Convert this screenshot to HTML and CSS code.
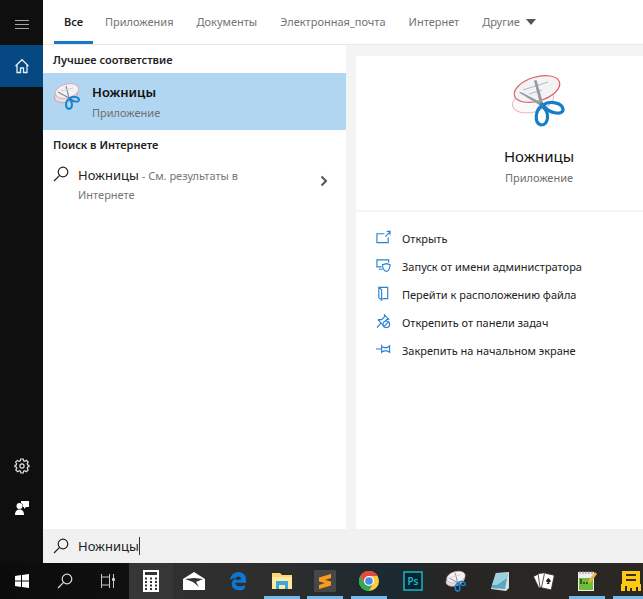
FILE: index.html
```html
<!DOCTYPE html>
<html lang="ru">
<head>
<meta charset="utf-8">
<meta name="viewport" content="width=device-width, initial-scale=1">
<title>Ножницы</title>
<link rel="stylesheet" href="styles.css">
</head>
<body>
<svg class="defs" aria-hidden="true">
  <symbol id="search" viewBox="0 0 16 16"><g fill="none" stroke="currentColor" stroke-width="1.2"><circle cx="10" cy="6" r="4.8"/><path d="M6.6 9.4 1 15"/></g></symbol>
  <symbol id="snip" viewBox="0 0 56 56">
    <ellipse cx="22" cy="27" rx="21" ry="11" transform="rotate(-14 22 27)" fill="#f8f8fa" fill-opacity=".7" stroke="#efb4b8"/>
    <ellipse cx="26" cy="15" rx="23.500" ry="12" transform="rotate(-17 26 15)" fill="#f2f3f5" stroke="#df6168" stroke-width="1.2"/>
    <path d="m12 16 25-8M18 20l13-4" stroke="#b8bdc4" stroke-width="1.2"/>
    <path d="M8 18.500 10 18l21 11-1 3zM23 6.500l2.500-.5 6.500 23-3 1z" fill="#929ba4"/>
    <g fill="none" stroke="#137ec9" stroke-width="3.2"><path d="M32 31c7-5 19-2 20 4s-13 6-20-4ZM31 32c-7 4-8 17-1 19 8 0 9-13 1-19Z"/></g>
    <circle cx="31" cy="31" r="2.500" fill="#2683bd"/>
  </symbol>
  <symbol id="snip-small" viewBox="0 0 28 28">
    <ellipse cx="13" cy="13" rx="12" ry="7" transform="rotate(-18 13 13)" fill="#dfe0e6" stroke="#d9a0ad"/>
    <ellipse cx="14" cy="9" rx="12" ry="7" transform="rotate(-15 14 9)" fill="#f3f1f3" stroke="#d9a0ad" stroke-width=".8"/>
    <path d="m5 10 11 6M13 4l3 12" stroke="#7f8790" stroke-width="1.1"/><path d="M8 9l12-3" stroke="#cdd0d4"/>
    <g fill="none" stroke="#1683cc" stroke-width="1.9"><path d="M17 16c5-3 9 0 9 2s-6 3-9-2ZM16 17c-4 2-4 9 0 10 4-1 4-7 0-10Z"/></g>
  </symbol>
</svg>
<div class="desktop">
  <div class="panel">
    <nav class="rail" aria-label="Меню">
      <button class="rail-button" aria-label="Развернуть"><svg width="16" height="16" viewBox="0 0 16 16"><path d="M1 4.5h14M1 8.500h14M1 12.500h14" stroke="#a5a5a5"/></svg></button>
      <button class="rail-button home" aria-label="Главная"><svg width="16" height="16" viewBox="0 0 16 16" fill="none" stroke="#e4eef7" stroke-width="1.3"><path d="m1.500 8 6.500-6.300L14.500 8M3 7v7.500h3.500V10h3v4.500H13V7"/></svg></button>
      <span class="rail-space"></span>
      <button class="rail-button" aria-label="Параметры"><svg width="16" height="16" viewBox="0 0 16 16" fill="none" stroke="#e4e4e4" stroke-width="1.200"><path d="m6.700 1-.4 1.900-1.300.5-1.600-1-1.800 1.800 1 1.600-.5 1.300L1 7.300v1.400l1.300.3.5 1.300-1 1.600 1.800 1.800 1.600-1 1.300.5.3 1.800h2.400l.4-1.800 1.200-.5 1.600 1 1.800-1.800-1-1.600.5-1.300 1.300-.3V7.300l-1.300-.3-.5-1.300 1-1.600-1.800-1.800-1.600 1-1.200-.5L9.200 1z"/><circle cx="8" cy="8" r="2.100"/></svg></button>
      <button class="rail-button" aria-label="Отзыв"><svg width="16" height="16" viewBox="0 0 16 16" fill="#fff"><path d="M7 1h8v6h-3l-2 2V7H9C9 4 8 3 7 3z"/><circle cx="5.500" cy="6" r="3"/><path d="M1 15c0-4 2-5.500 4.500-5.500S10 11 10 15z"/></svg></button>
    </nav>
    <main class="content">
      <nav class="tabs" aria-label="Категории">
        <button class="tab current">Все</button>
        <button class="tab">Приложения</button>
        <button class="tab">Документы</button>
        <button class="tab">Электронная_почта</button>
        <button class="tab">Интернет</button>
        <button class="tab more">Другие <svg width="10" height="6" viewBox="0 0 10 6"><path d="M0 0h10L5 6z" fill="#555"/></svg></button>
      </nav>
      <div class="columns">
        <section class="results">
          <h2 class="heading">Лучшее соответствие</h2>
          <button class="match">
            <svg width="28" height="28"><use href="#snip-small"/></svg>
            <span class="match-text"><strong class="match-name">Ножницы</strong><span class="kind">Приложение</span></span>
          </button>
          <h2 class="heading">Поиск в Интернете</h2>
          <button class="web">
            <svg width="16" height="16"><use href="#search"/></svg>
            <span class="web-text"><span class="query">Ножницы</span><span> - См. результаты в Интернете</span></span>
            <svg class="chevron" width="8" height="12" viewBox="0 0 8 12"><path d="m1.500 1.500 4.500 4.500-4.500 4.500" fill="none" stroke="#555" stroke-width="2"/></svg>
          </button>
        </section>
        <section class="details">
          <header class="app">
            <svg width="56" height="56"><use href="#snip"/></svg>
            <h1 class="app-name">Ножницы</h1>
            <p class="kind">Приложение</p>
          </header>
          <div class="actions">
            <button class="action"><svg viewBox="0 0 16 16"><path d="M9 4H1v9.500h12V8M10 7l5-5M11.500 1.500h3.500V5"/></svg>Открыть</button>
            <button class="action"><svg viewBox="0 0 16 16"><path d="M13.500 5V2H1v7.500h5M3 12h4M11 6l4 1.200c0 4-1 6-4 7.300-3-1.300-4-3.300-4-7.300z"/></svg>Запуск от имени администратора</button>
            <button class="action"><svg viewBox="0 0 16 16"><path d="M3 1.500h9.500v12H7M3 1.500l3 2.500v11l-3-2.500z"/></svg>Перейти к расположению файла</button>
            <button class="action"><svg viewBox="0 0 16 16"><path d="M1 14.500 5 10M2 6l6 6.500M2 6h4l3-3V1l4.500 4.500-2 .5L10 7.500"/><circle cx="11" cy="11" r="3.500"/><path d="m8.500 13.500 5-5"/></svg>Открепить от панели задач</button>
            <button class="action"><svg viewBox="0 0 16 16"><path d="M0 7.500h6M6 3v9M6 5l3 1h3l2.500-2v7L12 9.500H9L6 10.500"/></svg>Закрепить на начальном экране</button>
          </div>
        </section>
      </div>
      <label class="searchbar">
        <svg width="16" height="16"><use href="#search"/></svg>
        <input class="field" type="text" aria-label="Поиск" value="Ножницы"><span class="caret"></span>
      </label>
    </main>
  </div>
  <nav class="taskbar" aria-label="Панель задач">
    <button class="task" aria-label="Пуск"><svg width="16" height="16" viewBox="0 0 16 16"><path d="m1 3 6-1v5.500H1zM8 2l7-1v6.500H8zM1 8.500h6V14l-6-1zM8 8.500h7V15l-7-1z" fill="#fff"/></svg></button>
    <button class="task" aria-label="Поиск"><svg width="16" height="16" color="#ddd"><use href="#search"/></svg></button>
    <button class="task" aria-label="Представление задач"><svg width="16" height="16" viewBox="0 0 16 16" fill="none" stroke="#c8c8c8"><path d="M1.500 1v3h8V1M1.500 15v-3h8v3M1.500 4v8M9.500 4v8M13.500 1v14"/><path d="M12.500 5.500h2v2h-2z" fill="#ddd"/></svg></button>
    <div class="pinned">
      <button class="task lit" aria-label="Калькулятор"><svg width="18" height="22" viewBox="0 0 18 22"><path d="M1 0h16v22H1z" fill="#fff"/><path d="M3 2h12v3H3z" fill="#333"/><path d="M3 8.500h12M3 12h12M3 15.500h12M3 19h12" stroke="#333" stroke-width="2" stroke-dasharray="2 3"/></svg></button>
      <button class="task" aria-label="Почта"><svg width="22" height="20" viewBox="0 0 22 20"><path d="M0 8 11 1l11 7v11H0z" fill="#fff"/><path d="m2 8 9-1 9 1-7 3 3 5-6-5z" fill="#333"/></svg></button>
      <button class="task" aria-label="Edge"><svg width="18" height="20" viewBox="0 0 20 20"><path d="M1 9C2 3 6 0 10.500 0 16 0 19 4 19 9v3H7c0 3 3 4 5 4 2.500 0 4-.5 5.500-1.500v4C11 22 3 20 3 13c0-3 2-5.500 5-7-3 .3-5 1.300-7 3zm6-.5h6.500C13.500 6 12.500 5 10.500 5S7 6.500 7 8.500z" fill="#0d78d4"/></svg></button>
      <button class="task open" aria-label="Проводник"><svg width="20" height="18" viewBox="0 0 20 18"><path d="M0 1h8l2 2h10v14H0z" fill="#f8d979"/><path d="M0 5h20v12H0z" fill="#fde9a2"/><path d="M4 9h12v8h-3v-4H7v4H4z" fill="#38a9dd"/></svg></button>
      <button class="task open" aria-label="Sublime Text"><svg width="22" height="22" viewBox="0 0 22 22"><path d="M0 0h22v22H0z" fill="#474747"/><path d="m5 7.500 12-3.500v4l-6 2 6 1.500v4L5 19v-4l6-2-6-1.500z" fill="#f99b1c"/></svg></button>
      <button class="task open" aria-label="Chrome"><svg width="20" height="20" viewBox="0 0 20 20"><circle cx="10" cy="10" r="10" fill="#fc4"/><path d="M10 10V5h8.700A10 10 0 0 0 1.300 5L5.700 12.500z" fill="#e54b3d"/><path d="M1.300 5a10 10 0 0 0 8.700 15l4.300-7.500H5.700z" fill="#35a854"/><circle cx="10" cy="10" r="5" fill="#fff"/><circle cx="10" cy="10" r="3.800" fill="#4b89ec"/></svg></button>
      <button class="task" aria-label="Photoshop"><svg width="20" height="20" viewBox="0 0 20 20"><path d="M1 1h18v18H1z" fill="#06232f" stroke="#18b7c8" stroke-width="1.500"/><text x="10" y="14" text-anchor="middle" class="ps">Ps</text></svg></button>
      <button class="task" aria-label="Ножницы"><svg width="22" height="22"><use href="#snip-small"/></svg></button>
      <button class="task" aria-label="Блокнот"><svg width="20" height="20" viewBox="0 0 20 20"><path d="m6 2 13-1v16l-3 3-15-2z" fill="#d8dfe0"/><path d="M6 2h12l-3 16-14-1z" fill="#58a9bf"/><path d="M6 2h12l-1 5-10 7-5 0z" fill="#9bd2de"/></svg></button>
      <button class="task" aria-label="Пасьянс"><svg width="22" height="20" viewBox="0 0 22 20" fill="#fff" stroke="#333" stroke-width=".8"><rect x="3" y="3" width="8" height="13" rx="1" transform="rotate(-25 7 10)"/><rect x="6" y="2" width="8" height="14" rx="1" transform="rotate(-8 10 9)"/><rect x="10" y="3" width="10" height="15" rx="1" transform="rotate(12 15 10)"/><path d="M15.500 7c3 3 3 4.500.5 4l.6 2h-3l1.400-2c-3 0-2-2 .5-4z" fill="#222" stroke="none"/></svg></button>
      <button class="task open" aria-label="Notepad++"><svg width="20" height="22" viewBox="0 0 20 22"><path d="M1 2h16v19H1z" fill="#eee"/><path d="M2 8h14v12H2z" fill="#70bd38"/><path d="M3 1v3M6 1v3M9 1v3M12 1v3M15 1v3" stroke="#8b8b8b"/><path d="M4 14V9M6 13h2m1 0h2" stroke="#243d1c" stroke-width="1.500"/><path d="m11 14 1-4 6-8 2 2-6 8z" fill="#eeb33a"/></svg></button>
      <button class="task open" aria-label="Редактор"><svg width="20" height="22" viewBox="0 0 20 22"><path d="M1 1h18v13h1v7h-3v-4h-2v4h-4v-3H9v3H6v-5H4v5H0v-7h1z" fill="#ffc812"/><path d="M5 5h10M5 10h10" stroke="#393018" stroke-width="1.800"/></svg></button>
    </div>
  </nav>
</div>
</body>
</html>
```
FILE: styles.css
```css
* { box-sizing: border-box; }
body { margin: 0; font: 11px/20px "Noto Sans", "Open Sans", sans-serif; color: #222; }
button { margin: 0; padding: 0; border: 0; background: none; font: inherit; color: inherit; text-align: left; }
h1, h2, p { margin: 0; }
svg { display: block; flex-shrink: 0; }
.defs { position: absolute; width: 0; height: 0; }
.desktop { display: flex; flex-direction: column; min-height: 100vh; overflow: hidden; }
.panel { display: flex; flex: 1; }
.rail { display: flex; flex-direction: column; width: 43px; padding: 3px 0 34px; background: #0f0f0f; }
.rail-button { display: grid; place-items: center; height: 42px; }
.home { background: #064982; }
.rail-space { flex: 1; }
.content { display: flex; flex: 1; flex-direction: column; min-width: 0; background: #fff; }
.tabs { display: flex; gap: 23px; height: 45px; padding-left: 11px; border-bottom: 1px solid #e8e8e8; color: #737373; }
.tab { height: 44px; white-space: nowrap; }
.current { width: 39px; margin-right: -11px; border-bottom: 3px solid #1975c5; padding-top: 3px; color: #222; font-weight: 600; text-align: center; }
.more { display: flex; align-items: center; gap: 6px; }
.columns { display: grid; flex: 1; grid-template-columns: 303fr 287fr; gap: 10px; background: #f4f4f4; }
.results { background: #fff; }
.heading { padding: 5px 10px 3px; font-size: 11px; line-height: 20px; font-weight: 600; }
.match { display: flex; gap: 11px; width: 100%; height: 57px; padding: 9px 10px; background: #b1d6f2; }
.match-text { display: grid; }
.match-name { color: #111; font-size: 13px; line-height: 21px; font-weight: 600; }
.kind { color: #707070; }
.web { display: flex; gap: 9px; width: 100%; padding: 8px 18px 10px 10px; }
.web-text { flex: 1; max-width: 180px; color: #767676; line-height: 19px; }
.query { color: #222; font-size: 13px; line-height: 18px; }
.chevron { margin: 9px 0 0 auto; }
.details { margin-top: 11px; background: #fff; }
.app { display: flex; flex-direction: column; align-items: center; padding: 18px 0 22px 79px; border-bottom: 2px solid #f4f4f4; }
.app-name { margin-top: 15px; font-size: 15px; line-height: 23px; font-weight: 400; color: #111; }
.actions { display: grid; padding: 13px 20px; }
.action { display: flex; align-items: center; gap: 11px; height: 28px; white-space: nowrap; }
.action svg { width: 15px; height: 15px; margin-bottom: 4px; fill: none; stroke: #2680d2; stroke-width: 1.2; }
.searchbar { display: flex; align-items: center; height: 34px; padding-left: 10px; background: #f1f1f1; }
.field { field-sizing: content; margin-left: 9px; padding: 0; border: 0; outline: 0; background: none; color: #222; font: inherit; font-size: 13px; }
.caret { width: 1px; height: 18px; background: #333; }
.taskbar { display: flex; height: 36px; background: linear-gradient(90deg, #0b0b0b 0, #101010 20%, #303030 27%, #2d2d2d 45%, #1b2a31 60%, #282623 70%, #2b2824); }
.task { display: grid; flex: 0 0 43px; place-items: center; }
.pinned { display: grid; flex: 1; grid-template-columns: repeat(12, 1fr); margin-right: -10px; }
.lit { background: #363636; }
.open { background: linear-gradient(#76b9ed, #76b9ed) center bottom / 36px 3px no-repeat; }
.ps { fill: #18b7c8; font: 600 10px "Noto Sans", sans-serif; }
```
